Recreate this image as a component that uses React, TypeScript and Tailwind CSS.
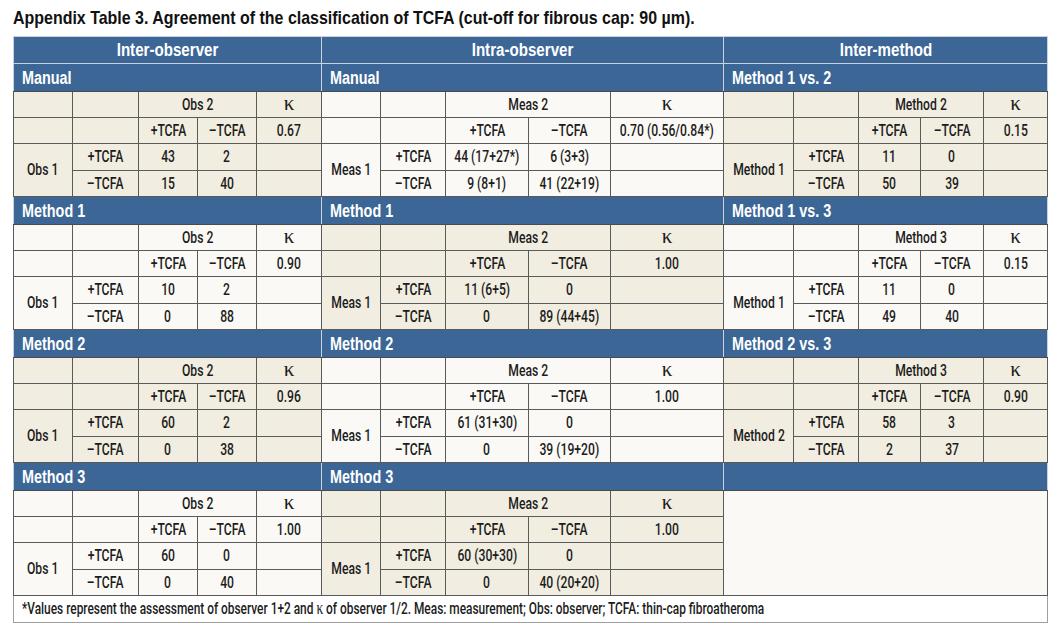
import React from "react";

type Block = {
  beige: boolean;
  colLabel: string;
  rowLabel: string;
  kappa: string;
  cells: [string, string, string, string];
} | null;

interface Section {
  titles: [string, string, string];
  blocks: [Block, Block, Block];
}

const sections: Section[] = [
  {
    titles: ["Manual", "Manual", "Method 1 vs. 2"],
    blocks: [
      { beige: true, colLabel: "Obs 2", rowLabel: "Obs 1", kappa: "0.67", cells: ["43", "2", "15", "40"] },
      { beige: false, colLabel: "Meas 2", rowLabel: "Meas 1", kappa: "0.70 (0.56/0.84*)", cells: ["44 (17+27*)", "6 (3+3)", "9 (8+1)", "41 (22+19)"] },
      { beige: true, colLabel: "Method 2", rowLabel: "Method 1", kappa: "0.15", cells: ["11", "0", "50", "39"] },
    ],
  },
  {
    titles: ["Method 1", "Method 1", "Method 1 vs. 3"],
    blocks: [
      { beige: false, colLabel: "Obs 2", rowLabel: "Obs 1", kappa: "0.90", cells: ["10", "2", "0", "88"] },
      { beige: true, colLabel: "Meas 2", rowLabel: "Meas 1", kappa: "1.00", cells: ["11 (6+5)", "0", "0", "89 (44+45)"] },
      { beige: false, colLabel: "Method 3", rowLabel: "Method 1", kappa: "0.15", cells: ["11", "0", "49", "40"] },
    ],
  },
  {
    titles: ["Method 2", "Method 2", "Method 2 vs. 3"],
    blocks: [
      { beige: true, colLabel: "Obs 2", rowLabel: "Obs 1", kappa: "0.96", cells: ["60", "2", "0", "38"] },
      { beige: false, colLabel: "Meas 2", rowLabel: "Meas 1", kappa: "1.00", cells: ["61 (31+30)", "0", "0", "39 (19+20)"] },
      { beige: true, colLabel: "Method 3", rowLabel: "Method 2", kappa: "0.90", cells: ["58", "3", "2", "37"] },
    ],
  },
  {
    titles: ["Method 3", "Method 3", ""],
    blocks: [
      { beige: false, colLabel: "Obs 2", rowLabel: "Obs 1", kappa: "1.00", cells: ["60", "0", "0", "40"] },
      { beige: true, colLabel: "Meas 2", rowLabel: "Meas 1", kappa: "1.00", cells: ["60 (30+30)", "0", "0", "40 (20+20)"] },
      null,
    ],
  },
];

const widths = [59, 66, 59, 59, 65, 59, 65, 83, 82, 113, 70, 65, 62, 63, 64];

// no condensed face installed: regular faces squeezed horizontally
const font = "font-['Liberation_Sans',Arial,sans-serif]";
const cellFont = "font-['Roboto','Liberation_Sans',sans-serif] font-medium";
const line = "border border-[#5a5a5a]";

function Td({ bg, children, ...rest }: { bg: string; children?: React.ReactNode } & React.TdHTMLAttributes<HTMLTableCellElement>) {
  return (
    <td className={`${line} ${bg} ${cellFont} p-0 align-middle text-[16px] leading-[20px] text-[#1c1c1c] whitespace-nowrap`} {...rest}>
      <div className="flex justify-center">
        <span className="scale-x-[0.76]">{children}</span>
      </div>
    </td>
  );
}

function Kappa({ size = "text-[21px]" }: { size?: string }) {
  return <span className={`font-['Liberation_Serif',serif] font-normal ${size} leading-none`}>κ</span>;
}

function blockRow(b: Block, r: number, key: number) {
  if (!b) {
    if (r === 0) return <td key={key} colSpan={5} rowSpan={4} className={`${line} bg-[#faf9f5]`} />;
    return null;
  }
  const bg = b.beige ? "bg-[#f1ede0]" : "bg-[#faf9f5]";
  if (r === 0)
    return (
      <React.Fragment key={key}>
        <Td bg={bg} />
        <Td bg={bg} />
        <Td bg={bg} colSpan={2}>{b.colLabel}</Td>
        <td className={`${line} ${bg} p-0 text-center text-[#1c1c1c]`}><Kappa /></td>
      </React.Fragment>
    );
  if (r === 1)
    return (
      <React.Fragment key={key}>
        <Td bg={bg} />
        <Td bg={bg} />
        <Td bg={bg}>+TCFA</Td>
        <Td bg={bg}>–TCFA</Td>
        <Td bg={bg}>{b.kappa}</Td>
      </React.Fragment>
    );
  if (r === 2)
    return (
      <React.Fragment key={key}>
        <Td bg={bg} rowSpan={2}>{b.rowLabel}</Td>
        <Td bg={bg}>+TCFA</Td>
        <Td bg={bg}>{b.cells[0]}</Td>
        <Td bg={bg}>{b.cells[1]}</Td>
        <Td bg={bg} />
      </React.Fragment>
    );
  return (
    <React.Fragment key={key}>
      <Td bg={bg}>–TCFA</Td>
      <Td bg={bg}>{b.cells[2]}</Td>
      <Td bg={bg}>{b.cells[3]}</Td>
      <Td bg={bg} />
    </React.Fragment>
  );
}

export default function App() {
  const rowH = ["h-[26px]", "h-[26px]", "h-[27px]", "h-[26px]"];
  return (
    <div className={`bg-white w-[1059px] h-[636px] ${font}`}>
      <div className="h-[36px] pl-[13px] pt-[6px]">
        <h1 className="origin-left scale-x-[0.84] whitespace-nowrap text-[19px] leading-[23px] font-bold text-[#111]">
          Appendix Table 3. Agreement of the classification of TCFA (cut-off for fibrous cap: 90 µm).
        </h1>
      </div>
      <table className="ml-[13px] w-[1034px] table-fixed border-collapse">
        <colgroup>
          {widths.map((w, i) => (
            <col key={i} style={{ width: w }} />
          ))}
        </colgroup>
        <tbody>
          <tr className="h-[27px]">
            {["Inter-observer", "Intra-observer", "Inter-method"].map(t => (
              <th
                key={t}
                colSpan={5}
                className="border border-[#c9d3e0] bg-[#3b6696] p-0 text-[18px] leading-[22px] font-bold text-white"
              >
                <div className="flex justify-center">
                  <span className="scale-x-[0.84]">{t}</span>
                </div>
              </th>
            ))}
          </tr>
          {sections.map((s, si) => (
            <React.Fragment key={si}>
              <tr className="h-[28px]">
                {s.titles.map((t, ti) => (
                  <td
                    key={ti}
                    colSpan={5}
                    className="border border-x-[#c9d3e0] border-t-[#c9d3e0] border-b-[#4a4a4a] bg-[#3b6696] p-0 pl-[8px] text-left text-[18px] leading-[22px] font-bold text-white whitespace-nowrap"
                  >
                    <span className="inline-block origin-left scale-x-[0.8]">{t}</span>
                  </td>
                ))}
              </tr>
              {[0, 1, 2, 3].map(r => (
                <tr key={r} className={rowH[r]}>
                  {s.blocks.map((b, bi) => blockRow(b, r, bi))}
                </tr>
              ))}
            </React.Fragment>
          ))}
          <tr className="h-[27px]">
            <td
              colSpan={15}
              className={`border border-[#a0a0a0] border-t-[#5a5a5a] bg-white ${cellFont} p-0 pl-[8px] text-left text-[16px] leading-[20px] text-[#1c1c1c] whitespace-nowrap`}
            >
              <span className="inline-block origin-left scale-x-[0.743]">
                *Values represent the assessment of observer 1+2 and <Kappa size="text-[18px]" /> of observer 1/2. Meas: measurement; Obs: observer; TCFA: thin-cap fibroatheroma
              </span>
            </td>
          </tr>
        </tbody>
      </table>
    </div>
  );
}
